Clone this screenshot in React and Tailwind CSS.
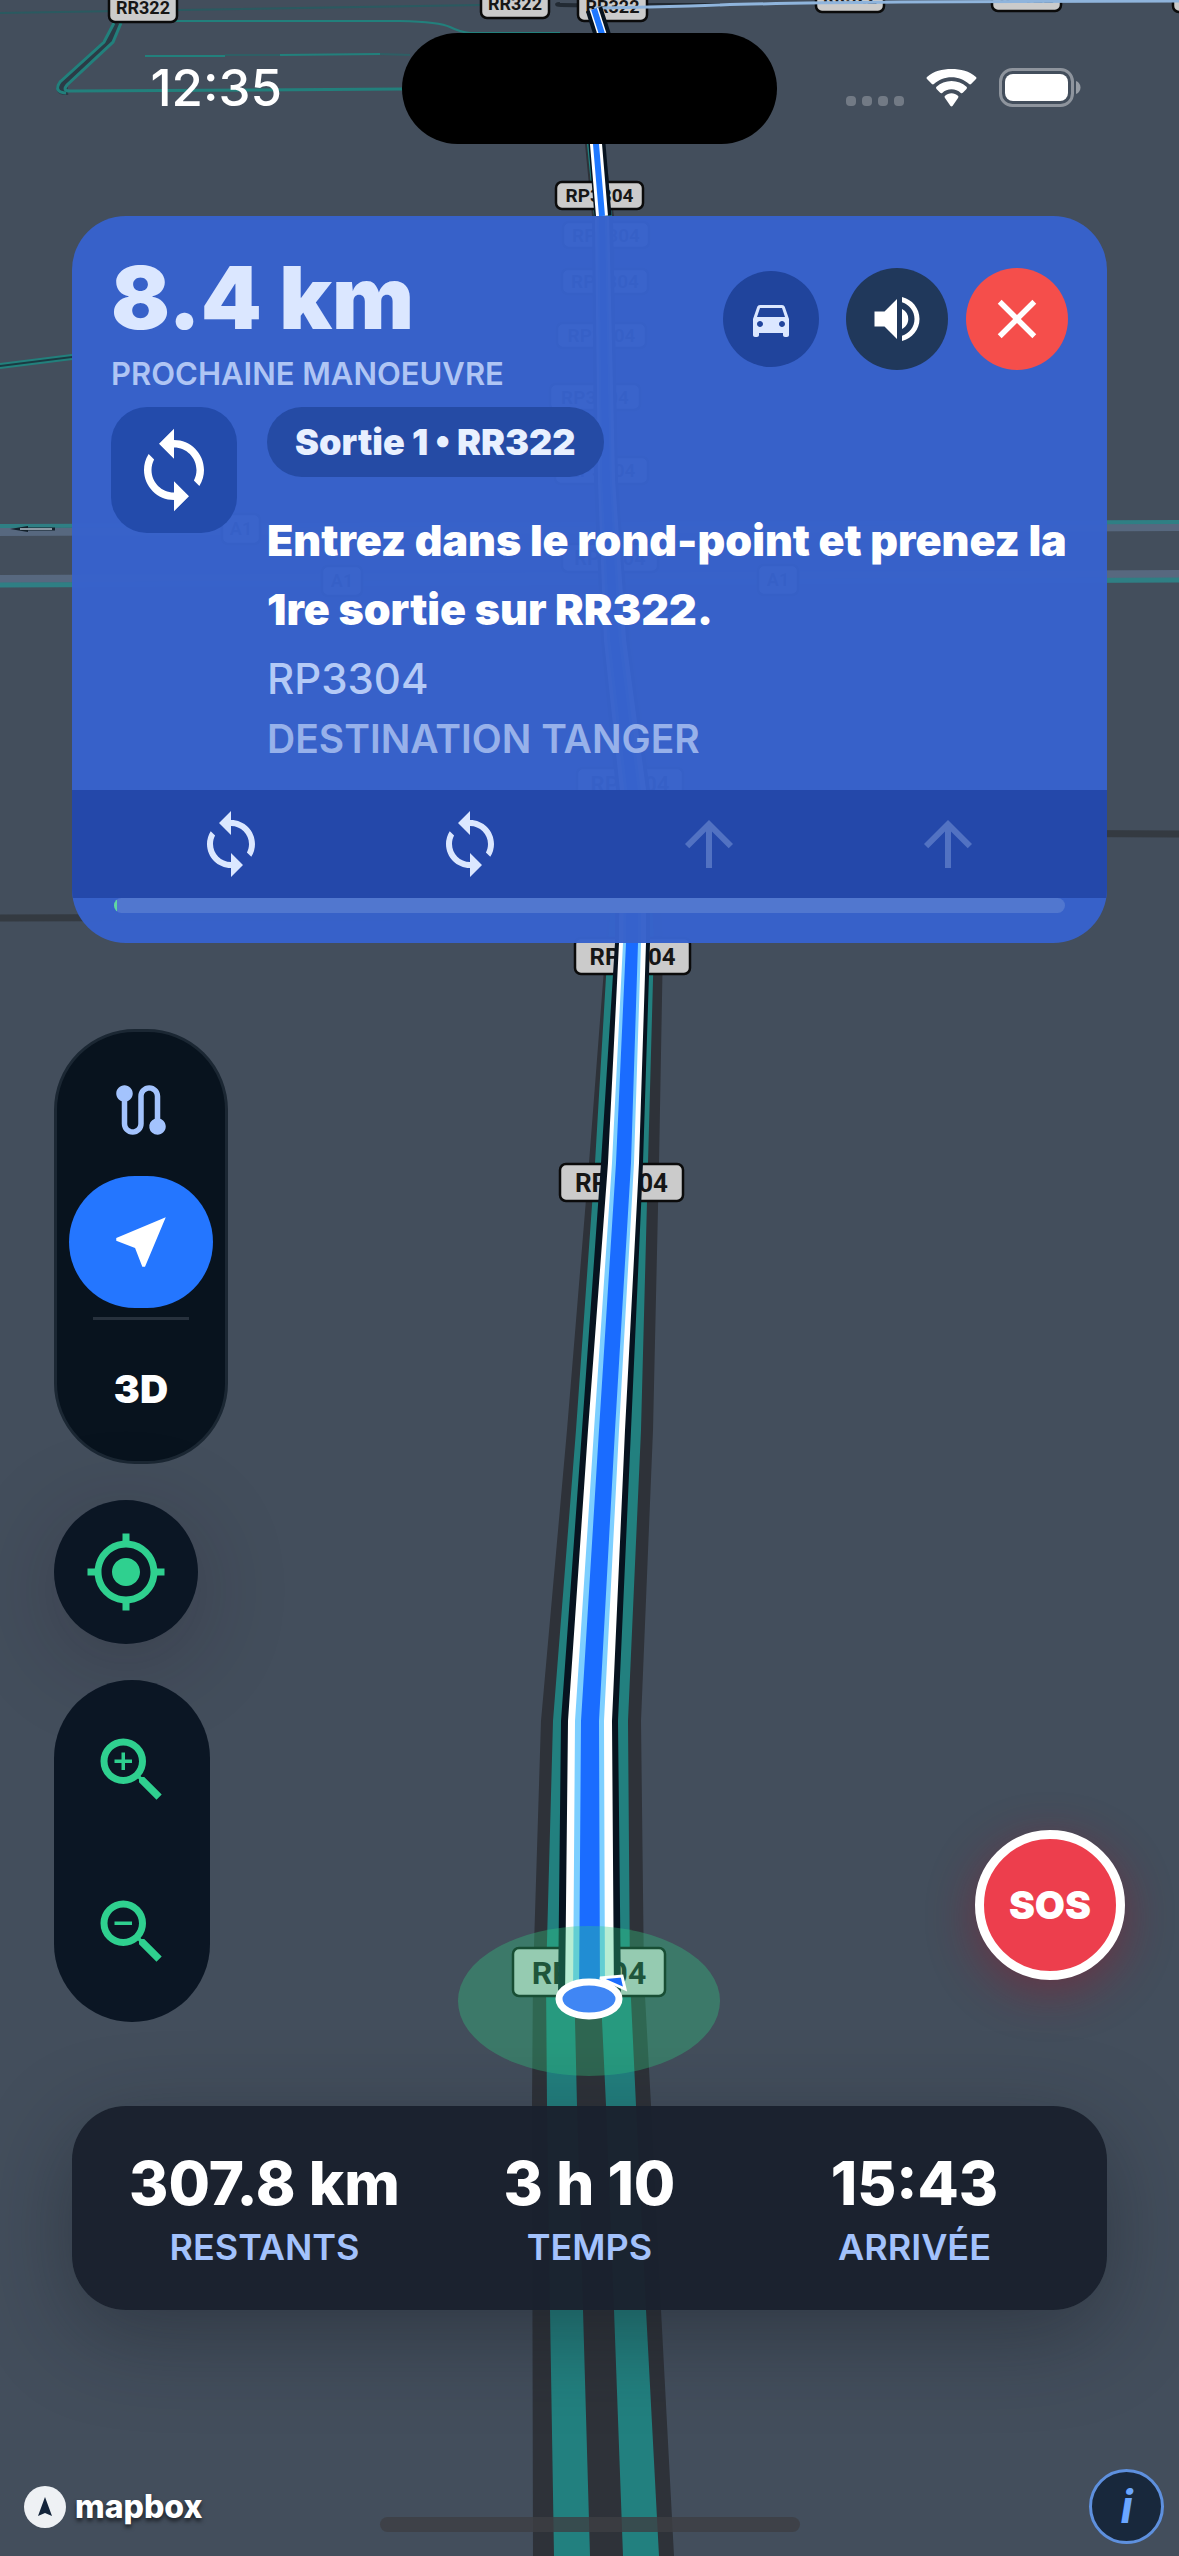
import React, { useState } from 'react';
import {
    MdArrowUpward,
    MdClose,
    MdDirectionsCar,
    MdMyLocation,
    MdNearMe,
    MdRoute,
    MdSync,
    MdVolumeUp,
    MdZoomIn,
    MdZoomOut,
} from 'react-icons/md';

const SHIELDS = [
    { label: 'RR322', x: 109, y: -6, w: 68, h: 28, size: 18 },
    { label: 'RR322', x: 481, y: -10, w: 68, h: 28, size: 18 },
    { label: 'RR322', x: 578, y: -7, w: 69, h: 28, size: 18 },
    { label: 'RR322', x: 816, y: -16, w: 68, h: 28, size: 18 },
    { label: 'RR322', x: 992, y: -17, w: 69, h: 28, size: 18 },
    { label: 'RR322', x: 1173, y: -16, w: 68, h: 28, size: 18 },
    { label: 'RP3304', x: 556, y: 182, w: 87, h: 27, size: 19 },
    { label: 'RP3304', x: 563, y: 222, w: 86, h: 26, size: 19 },
    { label: 'RP3304', x: 562, y: 269, w: 86, h: 25, size: 19 },
    { label: 'RP3304', x: 557, y: 323, w: 89, h: 25, size: 19 },
    { label: 'RP3304', x: 550, y: 384, w: 90, h: 26, size: 19 },
    { label: 'RP3304', x: 555, y: 457, w: 93, h: 27, size: 19 },
    { label: 'A1', x: 222, y: 514, w: 38, h: 30, size: 18 },
    { label: 'RP3304', x: 562, y: 544, w: 96, h: 28, size: 20 },
    { label: 'A1', x: 322, y: 566, w: 40, h: 30, size: 18 },
    { label: 'A1', x: 758, y: 565, w: 40, h: 30, size: 18 },
    { label: 'RP3304', x: 577, y: 768, w: 106, h: 32, size: 22 },
    { label: 'RP3304', x: 575, y: 938, w: 115, h: 36, size: 24 },
    { label: 'RP3304', x: 560, y: 1164, w: 123, h: 37, size: 26 },
    { label: 'RP3304', x: 513, y: 1948, w: 152, h: 48, size: 32 },
];

const Shield = ({ label, x, y, w, h, size }) => (
    <g>
        <rect x={x} y={y} width={w} height={h} rx="6" fill="#cbcbcb" stroke="#0b0b0b" strokeWidth="2.5" />
        <text
            x={x + w / 2}
            y={y + h / 2 + size * 0.36}
            textAnchor="middle"
            fontSize={size}
            fontWeight="700"
            fontFamily="Roboto, sans-serif"
            fill="#161616"
        >
            {label}
        </text>
    </g>
);

const MapCanvas = () => (
    <svg
        className="absolute inset-0 h-full w-full"
        viewBox="0 0 1179 2556"
        preserveAspectRatio="xMidYMid slice"
        aria-hidden="true"
    >
        {/* Distant roads */}
        <g fill="none" stroke="#22807c" strokeWidth="2">
            <path d="M0 13L480 5" stroke="#2a5a60" />
            <path d="M117 23L108 42L64 82Q55 92 68 91" stroke="#2b3b46" strokeWidth="8" />
            <path d="M121 23L113 42L67 85Q62 91 70 91L402 89" strokeWidth="3" />
            <path d="M114 23L104 42L60 82Q53 92 66 93" strokeWidth="3" />
            <path d="M170 21H400Q440 22 450 27T470 33H560" />
            <path d="M145 56H225M280 55L380 54" />
            <path d="M225 55H280M380 54L410 55" stroke="#2e5f65" />
            <path d="M0 366L72 357" stroke="#1b3a42" strokeWidth="4" />
            <path d="M0 364L72 355M0 368L72 359" />
        </g>
        <path d="M720 5H660Q540 6 560 4" fill="none" stroke="#222a33" strokeWidth="4" />

        {/* Motorway */}
        <g fill="none">
            <path d="M0 532L1179 527" stroke="#57687f" strokeWidth="8" />
            <path d="M0 526L1179 522" stroke="#2f7f84" strokeWidth="4" />
            <path d="M0 579L1179 574" stroke="#57687f" strokeWidth="8" />
            <path d="M0 585L1179 580" stroke="#2f7f84" strokeWidth="5" />
            <path d="M0 918L620 916L680 832L1179 834" stroke="#343a41" strokeWidth="7" />
        </g>
        <path d="M10 529L28 526V532Z" fill="#13202b" />
        <path d="M22 529H55" stroke="#13202b" strokeWidth="3" />
        <path d="M20 529H52" stroke="#b9c3cf" strokeWidth="1.5" />

        {/* Main road */}
        <path
            d="M585 144L592 216L596 480L601 640L615 790L606 943L589 1163L567 1430L541 1721L533 1978L532 2105L533 2556H674L661 2310L651 2105L644 1978L641 1721L653 1430L659 1163L663 943L652 790L631 640L616 480L614 216L604 144Z"
            fill="#2e3239"
        />
        <path
            d="M587 144L594 216L598 480L604 640L619 790L608 943L595 1163L576 1430L553 1721L546 1978L547 2105L550 2310L554 2556H590L583 2310L577 2105L574 1978L580 1721L600 1430L620 1163L632 943L631 790L612 640L604 480L602 216L596 144Z"
            fill="#22807f"
        />
        <path
            d="M596 144L602 216L604 480L612 640L631 790L632 943L622 1163L604 1430L592 1721L600 1978L606 2105L614 2310L623 2556H659L646 2310L636 2105L630 1978L628 1721L641 1430L648 1163L654 943L648 790L626 640L613 480L612 216L604 144Z"
            fill="#22807f"
        />

        {SHIELDS.map((s) => (
            <Shield key={`${s.label}-${s.x}-${s.y}`} {...s} />
        ))}

        {/* Active route */}
        <path d="M596 8Q660 7 720 5T900 2L1179 1" fill="none" stroke="#8fb4dc" strokeWidth="3" />
        <path d="M594 9L602 34L590 88L597 144L603 216" fill="none" stroke="#07131f" strokeWidth="17" />
        <path d="M594 9L602 34" fill="none" stroke="#fff" strokeWidth="9" />
        <path d="M602 34L590 88L596 144L602 216" fill="none" stroke="#fff" strokeWidth="12" />
        <path d="M594 9L602 34L590 88L596 144L602 216" fill="none" stroke="#1f78ff" strokeWidth="6" />
        <path
            d="M592 216L594 480L601 640L616 790L615 943L601 1163L582 1430L561 1721L558 1998H621L618 1721L631 1430L643 1163L650 943L650 790L629 640L618 480L613 216Z"
            fill="#07131f"
        />
        <path
            d="M595 216L598 480L604 640L620 790L619 943L608 1163L588 1430L568 1721L565 1998H614L612 1721L625 1430L639 1163L646 943L646 790L626 640L615 480L609 216Z"
            fill="#fff"
        />
        <path
            d="M597 216L600 480L607 640L624 790L623 943L612 1163L594 1430L575 1721L573 1998H605L604 1721L619 1430L634 1163L641 943L641 790L622 640L612 480L607 216Z"
            fill="#7dcfff"
        />
        <path
            d="M599 216L602 480L610 640L627 790L626 943L616 1163L599 1430L581 1721L579 1998H600L599 1721L615 1430L631 1163L638 943L638 790L619 640L610 480L605 216Z"
            fill="#1a6cff"
        />

        {/* Position puck */}
        <ellipse cx="589" cy="2001" rx="131" ry="75" fill="#32cc81" fillOpacity="0.35" />
        <path d="M600 1978L622 1976L625 1989Z" fill="#1a6cff" stroke="#fff" strokeWidth="3" />
        <ellipse cx="589" cy="1999" rx="30" ry="17" fill="#4086f4" stroke="#fff" strokeWidth="7" />
    </svg>
);

const StatusBar = () => (
    <div className="grid h-[216px] grid-cols-[1fr_375px_1fr] items-start text-white">
        <div className="flex justify-end pt-[58px] pr-[120px]">
            <span className="text-[51px] leading-[60px] font-medium">12:35</span>
        </div>
        <div className="mt-[33px] h-[111px] rounded-full bg-black" />
        <div className="flex items-end justify-end gap-[22px] pt-[68px] pr-[98px]">
            <div className="flex gap-[6px] pb-[1px]">
                <span className="h-[10px] w-[10px] rounded-[4px] bg-white/25" />
                <span className="h-[10px] w-[10px] rounded-[4px] bg-white/25" />
                <span className="h-[10px] w-[10px] rounded-[4px] bg-white/25" />
                <span className="h-[10px] w-[10px] rounded-[4px] bg-white/25" />
            </div>
            <svg className="h-[38px] w-[51px]" viewBox="0 0 51 38" fill="#fff" aria-hidden="true">
                <path d="M25.500 8.200c6.700 0 12.900 2.600 17.600 6.900.6.500 1.400.5 2-.1l4.900-5c.6-.6.6-1.500 0-2C43.400 1.900 34.700 0 25.500 0S7.600 1.900 1 8c-.6.500-.6 1.400 0 2l4.900 5c.6.600 1.400.600 2 .1 4.700-4.300 10.900-6.900 17.600-6.900z" />
                <path d="M25.500 20.300c3.500 0 6.800 1.400 9.300 3.600.6.500 1.500.5 2-.1l3.700-3.900c.6-.6.6-1.600 0-2.100-4-3.600-9.300-5.700-15-5.700s-11 2.100-15 5.700c-.6.500-.6 1.500 0 2.100l3.700 3.900c.5.600 1.400.6 2 .1 2.500-2.200 5.800-3.600 9.300-3.600z" />
                <path d="M32 28.900c.6-.6.6-1.500-.1-2.100-1.700-1.500-3.900-2.500-6.400-2.500s-4.700 1-6.400 2.500c-.7.600-.7 1.500-.1 2.100l5.500 8.100c.6.600 1.400.6 2 0z" />
            </svg>
            <svg className="h-[39px] w-[82px]" viewBox="0 0 82 39" fill="none" aria-hidden="true">
                <rect x="1.500" y="1.500" width="72" height="36" rx="12" stroke="#fff" strokeOpacity="0.4" strokeWidth="3" />
                <rect x="6" y="6" width="63" height="27" rx="8" fill="#fff" />
                <path d="M77 13c3 1 4.500 4 4.500 6.500S80 25 77 26z" fill="#fff" fillOpacity="0.45" />
            </svg>
        </div>
    </div>
);

const ManeuverCard = ({ muted, onToggleMute }) => (
    <section className="mx-[72px] overflow-hidden rounded-[54px] bg-[#3762cb]/98 pb-[30px]">
        <div className="flex items-start justify-between px-[39px] pt-[36px]">
            <div>
                <p className="text-[87px] leading-[92px] font-black text-[#dbe7ff]">8.4 km</p>
                <p className="mt-[9px] text-[31px] leading-[42px] font-semibold text-[#afc5f4]">
                    PROCHAINE MANOEUVRE
                </p>
            </div>
            <div className="mt-4 flex items-center">
                <button
                    aria-label="Véhicule"
                    className="flex h-[96px] w-[96px] items-center justify-center rounded-full bg-[#20449c]"
                >
                    <MdDirectionsCar className="h-[48px] w-[48px] text-[#dbe7ff]" />
                </button>
                <button
                    aria-label="Son"
                    aria-pressed={muted}
                    onClick={onToggleMute}
                    className="ml-[27px] flex h-[102px] w-[102px] items-center justify-center rounded-full bg-[#20385b]"
                >
                    <MdVolumeUp className="h-[60px] w-[60px] text-white" />
                </button>
                <button
                    aria-label="Fermer"
                    className="ml-[18px] flex h-[102px] w-[102px] items-center justify-center rounded-full bg-[#f54e4b]"
                >
                    <MdClose className="h-[66px] w-[66px] text-white" />
                </button>
            </div>
        </div>

        <div className="flex gap-[30px] px-[39px] pt-[12px] pb-[30px]">
            <div className="flex h-[126px] w-[126px] shrink-0 items-center justify-center rounded-[36px] bg-[#234bab]">
                <MdSync className="h-[90px] w-[90px] text-white" />
            </div>
            <div className="min-w-0 flex-1">
                <span className="flex h-[70px] w-fit items-center rounded-full bg-[#254ba5] px-[28px] text-[36px] font-black text-[#e8f0ff]">
                    Sortie 1 • RR322
                </span>
                <h1 className="mt-[29px] text-[43px] leading-[69px] font-black text-white">
                    Entrez dans le rond-point et prenez la 1re sortie sur RR322.
                </h1>
                <p className="mt-[9px] text-[42px] leading-[51px] font-medium text-[#b4caf6]">RP3304</p>
                <p className="mt-[14px] text-[39px] leading-[42px] font-semibold text-[#97b1ea]">
                    DESTINATION TANGER
                </p>
            </div>
        </div>

        <div className="grid h-[108px] grid-cols-4 items-center justify-items-center bg-[#2448aa] px-[39px]">
            <MdSync className="h-[72px] w-[72px] text-[#dbe7ff]" />
            <MdSync className="h-[72px] w-[72px] text-[#dbe7ff]" />
            <MdArrowUpward className="h-[72px] w-[72px] text-[#5272c2]" />
            <MdArrowUpward className="h-[72px] w-[72px] text-[#5272c2]" />
        </div>
        <div className="mx-[42px] h-[15px] overflow-hidden rounded-full bg-[#5177cf]">
            <div className="h-full w-[3px] bg-[#5fd9a0]" />
        </div>
    </section>
);

const MapControls = () => (
    <div className="flex flex-col items-start gap-[36px]">
        <div className="flex flex-col items-center rounded-[81px] border-3 border-[#1b2733] bg-[#08131e] p-[12px]">
            <button aria-label="Itinéraire" className="flex h-[132px] w-[144px] items-center justify-center">
                <MdRoute className="h-[66px] w-[66px] text-[#a3c3fd]" />
            </button>
            <button
                aria-label="Suivre"
                className="flex h-[132px] w-[144px] items-center justify-center rounded-full bg-[#2476ff]"
            >
                <MdNearMe className="h-[66px] w-[66px] text-white" />
            </button>
            <div className="my-[9px] h-[3px] w-[96px] bg-[#27313d]" />
            <button className="h-[120px] w-[144px] text-[39px] font-black text-white">3D</button>
        </div>

        <button
            aria-label="Ma position"
            className="flex h-[144px] w-[144px] items-center justify-center rounded-full bg-[#0b1624] shadow-[0_18px_90px_rgba(30,20,30,0.25)]"
        >
            <MdMyLocation className="h-[84px] w-[84px] text-[#2fd08f]" />
        </button>

        <div className="flex flex-col rounded-[78px] bg-[#0b1624] py-[9px]">
            <button aria-label="Zoom avant" className="flex h-[162px] w-[156px] items-center justify-center">
                <MdZoomIn className="h-[84px] w-[84px] text-[#2fd08f]" />
            </button>
            <button aria-label="Zoom arrière" className="flex h-[162px] w-[156px] items-center justify-center">
                <MdZoomOut className="h-[84px] w-[84px] text-[#2fd08f]" />
            </button>
        </div>
    </div>
);

const TRIP_STATS = [
    { value: '307.8 km', label: 'RESTANTS' },
    { value: '3 h 10', label: 'TEMPS' },
    { value: '15:43', label: 'ARRIVÉE' },
];

const TripSummary = () => (
    <section className="mx-[72px] mt-[84px] grid grid-cols-3 rounded-[54px] bg-[#1a212d]/97 px-[30px] py-[41px] text-center shadow-[0_24px_90px_rgba(20,24,32,0.4)]">
        {TRIP_STATS.map(({ value, label }) => (
            <div key={label}>
                <p className="text-[60px] leading-[72px] font-extrabold text-white">{value}</p>
                <p className="mt-[6px] text-[36px] leading-[44px] font-semibold text-[#a3c2fc]">{label}</p>
            </div>
        ))}
    </section>
);

const Footer = () => (
    <footer className="mt-auto grid grid-cols-[1fr_420px_1fr] items-center pt-[60px] pb-[12px]">
        <div className="flex items-center gap-[9px] pl-[24px]">
            <svg className="h-[42px] w-[42px]" viewBox="0 0 42 42" aria-hidden="true">
                <circle cx="21" cy="21" r="21" fill="#eef1f4" />
                <path d="M21 11L28 30L21 27L14 30Z" fill="#13243a" />
            </svg>
            <a href="#mapbox" className="text-[32px] leading-[42px] font-extrabold text-white text-shadow-[0_3px_4px_rgba(0,0,0,0.6)]">
                mapbox
            </a>
        </div>
        <div className="mb-[12px] h-[15px] self-end rounded-full bg-[#3d3f43]/80" />
        <div className="flex justify-end pr-[15px]">
            <button
                aria-label="Informations"
                className="h-[75px] w-[75px] rounded-full border-3 border-[#5e90de] bg-[#18283c] text-[45px] font-bold text-[#6aa6ff] italic"
            >
                i
            </button>
        </div>
    </footer>
);

const App = () => {
    const [muted, setMuted] = useState(false);

    return (
        <main className="relative min-h-screen overflow-hidden bg-[#434e5c] font-['Inter',sans-serif]">
            <MapCanvas />
            <div className="relative flex min-h-screen flex-col">
                <StatusBar />
                <ManeuverCard muted={muted} onToggleMute={() => setMuted(!muted)} />
                <div className="flex items-end justify-between px-[54px] pt-[86px]">
                    <MapControls />
                    <button className="mb-[42px] h-[150px] w-[150px] rounded-full border-9 border-white bg-[#ed3e4d] text-[39px] font-black text-white shadow-[0_12px_48px_rgba(150,20,40,0.45)]">
                        SOS
                    </button>
                </div>
                <TripSummary />
                <Footer />
            </div>
        </main>
    );
};

export default App;
